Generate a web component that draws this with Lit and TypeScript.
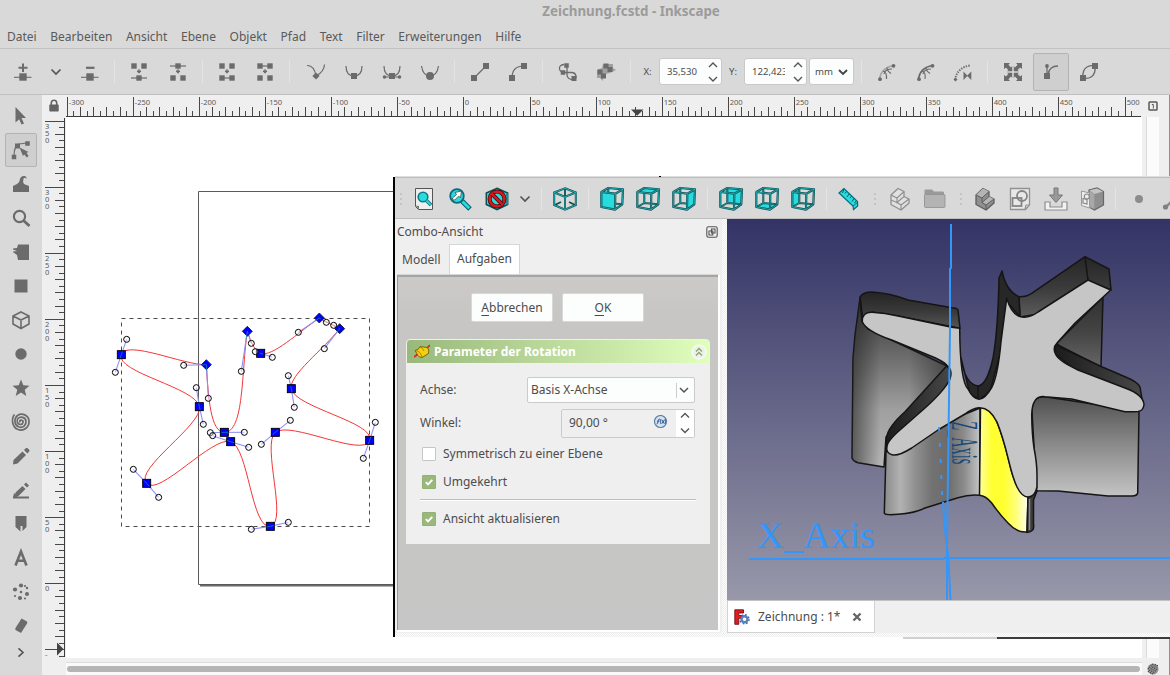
import { LitElement, html, css, svg } from "lit";
import { customElement } from "lit/decorators.js";

const G = "#6b6b6b";
const sq = (x: number, y: number, s = 6) => svg`<rect x=${x - s / 2} y=${y - s / 2} width=${s} height=${s} fill=${G}/>`;
const ln = (d: string, w = 1.2, c = G) => svg`<path d=${d} fill="none" stroke=${c} stroke-width=${w}/>`;
const fl = (d: string, c = G) => svg`<path d=${d} fill=${c}/>`;
const arrow = svg`<path d="M12 9V12M10 11H14L12 13.2Z" fill=${G} stroke=${G} stroke-width="1"/>`;

const D = "#0b4f52";
const T = "#27dbdf";
const cube = (face: string, back = false) => svg`
  ${back ? fl(face, T) : ""}
  <path d="M8.3 1V16L1.3 20M8.3 16L22.3 17.3" fill="none" stroke=${D} stroke-width="2"/>
  <path d="M8.3 1V16L1.3 20M8.3 16L22.3 17.3" fill="none" stroke="#2ba5a8" stroke-width=".7"/>
  ${back ? "" : fl(face, T)}
  <path d="M1.3 5L15.3 6.7L15 22.7L1.3 20ZM1.3 5L8.3 1L23 2.3L15.3 6.7M23 2.3L22.3 17.3L15 22.7" fill="none" stroke=${D} stroke-width="2.2" stroke-linejoin="round"/>
  <path d="M1.3 5L15.3 6.7L15 22.7L1.3 20ZM1.3 5L8.3 1L23 2.3L15.3 6.7M23 2.3L22.3 17.3L15 22.7" fill="none" stroke="#2ec4c8" stroke-width=".7" stroke-linejoin="round"/>`;

const ICONS: Record<string, unknown> = {
  add: svg`${sq(12, 17, 7.4)}${ln("M3 17.3H20.5", 1.1)}${ln("M12 3.5V12M7.5 7.8H16.5", 2)}`,
  del: svg`${sq(12, 17, 7.4)}${ln("M3 17.3H20.5", 1.1)}${ln("M8 7.8H16.5", 2.2)}`,
  chev: ln("M7.5 9.5L12 14L16.5 9.5", 1.7, "#555"),
  join: svg`${sq(7, 6, 5.4)}${sq(17, 6, 5.4)}${sq(12, 18, 5.4)}${ln("M4 18H20")}${arrow}`,
  brk: svg`${sq(12, 6, 5.4)}${sq(7, 18, 5.4)}${sq(17, 18, 5.4)}${ln("M4 6H20")}${arrow}`,
  joinseg: svg`${sq(7, 6, 5.4)}${sq(17, 6, 5.4)}${sq(7, 18, 5.4)}${sq(17, 18, 5.4)}${ln("M7 18H17")}${arrow}`,
  delseg: svg`${sq(7, 6, 5.4)}${sq(17, 6, 5.4)}${sq(7, 18, 5.4)}${sq(17, 18, 5.4)}${ln("M7 6H17")}${arrow}`,
  cusp: svg`${ln("M3 5.5Q10 5 12 16Q20 12 20.5 4.5")}${fl("M8.4 16L12 12.4L15.6 16L12 19.6Z")}`,
  smooth: svg`${ln("M4 6Q4 16 12 16Q20 16 20 6")}${sq(12, 16)}`,
  symm: svg`${ln("M4 6Q4 16 12 16Q20 16 20 6M4 17H20")}${sq(12, 16)}<circle cx="4.5" cy="17" r="1.8" fill=${G}/><circle cx="19.5" cy="17" r="1.8" fill=${G}/>`,
  auto: svg`${ln("M3.5 6Q5 16 12 16Q19 16 20.5 6")}<circle cx="12" cy="16" r="4" fill=${G}/>`,
  line: svg`${ln("M6 18L18 6")}${sq(6, 18)}${sq(18, 6)}`,
  curve: svg`${ln("M6 18Q6 6 18 6")}${sq(6, 18)}${sq(18, 6)}`,
  o2p: svg`${ln("M8 4.5Q3 5 3.5 9Q4 12 8 12.5H16Q20.5 13 20 18", 1.3)}${ln("M11 5.5V15Q11.5 19.5 17 19.5", 1.3)}${sq(10.5, 5.5, 4.5)}${sq(7, 12.5, 4.5)}${sq(18, 18.5, 5)}`,
  s2p: svg`${fl("M3 10L8 8L9 4L19 4L19 8L22 10L16 13L12 14L9 17L9 21L6 18L3 18Z", "#a0a0a0")}${sq(12, 6, 5)}${sq(6, 12, 5)}${sq(16, 9.5, 5)}${sq(9.5, 16, 5)}`,
  lpe1: svg`${ln("M4.5 19Q6 8 18.5 5.5", 1.4, "#a5a5a5")}${ln("M8 11Q12 12 11.5 19M12 7.5Q12 11 16 13.5M9 14Q10 9 17 9", 1.2)}<circle cx="5" cy="19.2" r="1.9" fill=${G}/><circle cx="18.5" cy="5.8" r="1.9" fill=${G}/>`,
  lpe2: svg`${ln("M4.5 19Q6 7.5 18.5 5.5", 1.6)}${ln("M8 11Q12 12 11 19M12 8Q12 11 16 13.5M9 14Q10 9 17 9", 1.1)}<circle cx="5" cy="19.2" r="1.9" fill=${G}/><circle cx="18.5" cy="5.8" r="1.9" fill=${G}/>`,
  lpe3: svg`<path d="M4 20Q6 7.5 19 5.5" fill="none" stroke=${G} stroke-width="2" stroke-dasharray="1.4 1.2"/>${fl("M12.5 11.5L16.5 15.7L12.5 20ZM16 15.7L20.3 11.5V20Z")}${fl("M4.5 17.5l2 2-2 2-2-2z")}`,
  handles4: svg`${[0, 90, 180, 270].map(a => svg`<path transform="rotate(${a} 12 12)" d="M3 3H9L7.4 4.8L10 7.4L11.2 6V11.2H6L7.4 10L4.8 7.4L3 9Z" fill=${G}/>`)}`,
  handle: svg`${ln("M8 16V6M9 15Q10 6 19 6", 1.3)}${sq(8, 16)}<circle cx="8" cy="6" r="1.9" fill=${G}/>`,
  outline: svg`${ln("M6 18Q5 10 10 7Q14 5 18 6Q19 14 14 17Q11 19 6 18Z", 1.3)}${sq(6, 18)}${sq(18, 6)}`,

  select: fl("M6.5 3L17 14H12.5L15 19.5L12.5 20.5L10.2 15.2L6.5 18.5Z"),
  node: svg`${ln("M5 18Q5 8 10 6L18 5")}${sq(5, 19, 4.5)}${sq(8.5, 8, 5)}${sq(18.5, 5.5, 4.5)}${fl("M10.5 9.5L19.5 14L17.5 14.7L19.5 18L18 19.5L15.2 16.5L14 18Z")}`,
  tweak: fl("M4 20V14L8 12Q11 10 11 7Q12 3.5 16 4Q18 5 17.5 7Q16 5 14.5 6.5Q13.5 10 15 12L20 14V20Z"),
  zoom: svg`<circle cx="10.5" cy="10.5" r="5.6" fill="none" stroke=${G} stroke-width="2.1"/>${ln("M14.5 14.5L20.5 20", 2.8)}`,
  measure: svg`${fl("M9 4.5H20V20H9L8 15L4.5 12.5L4 11.5L8 11L4 9.5V8.5L8 8Z")}`,
  rect: fl("M5.5 5.5H18.5V18.5H5.5Z"),
  box: ln("M12 4L20 8V16L12 20.5L4 16V8ZM4 8L12 12L20 8M12 12V20.5", 1.6),
  ellipse: svg`<circle cx="12" cy="12" r="5.7" fill=${G}/>`,
  star: fl("M12 3.5L14.3 9.3L20.5 9.8L15.7 13.7L17.3 20L12 16.5L6.7 20L8.3 13.7L3.5 9.8L9.7 9.3Z"),
  spiral: ln("M5.5 4.5C2 9 3 17 9 19.5C15 21.5 20.5 17 20 11C19.5 5 13 2.5 8.5 5.5C4.5 9 5.5 15 9.5 16.8C14 18.5 17.5 15 17 11C16.3 7 11.5 6 9 8.5C7 11 8.5 14.3 11.5 14.5C14.5 14.3 15 10.5 12.3 10C10.8 10 10.3 11.5 11.2 12.4", 1.7),
  pencil: fl("M4 20.5L4.5 16L13.5 7.5L17 11L8.5 19.5ZM15 6L17 4Q18 3.5 19.8 5.2Q21 6.5 20.2 7.5L18.3 9.5Z"),
  pen: svg`${fl("M6 18L6.5 14.5L13.5 8L16.5 11L9.5 18ZM15 6.5L17 4.5L20 7.5L18 9.5Z")}${ln("M4 19.5H20", 2)}${fl("M4 20L5 15L9 19Z")}`,
  calli: fl("M6.5 4H17.5V15L13.5 19V14H11.5V19.5L6.5 15Z"),
  text: ln("M6.5 19.5L12 5.5L17.5 19.5M8.5 14.7H15.5", 2.6),
  spray: svg`${[[12, 5.5, 2.1], [18, 8, 1.2], [6, 9.5, 2.1], [18, 14, 2], [11, 18, 2.1], [12, 12, 1.3], [6, 16, 1.1], [16, 6, 1.1], [16, 18.5, 1.1]].map(c => svg`<circle cx=${c[0]} cy=${c[1]} r=${c[2]} fill=${G}/>`)}`,
  eraser: fl("M12.5 4.5L18 7.5Q18.5 8.5 18 9.5L12 19L6.5 16Q6 15 6.5 14Z"),
  more: ln("M9.5 7.3L14 11.5L9.5 15.7", 1.6, "#555"),

  fitall: svg`<path d="M3.5 1.5H20.5V22.5H6.5L3.5 19.5Z" fill="#eeeeec" stroke="#555" stroke-width="1"/>${fl("M3.5 18.5L7 19V22.5Z", "#777")}<circle cx="11" cy="10" r="4.8" fill=${T} stroke="#0c7a88" stroke-width="1.6"/>${ln("M14.5 13.5L19 18", 3.6, "#0c6a78")}${ln("M14.5 13.5L18.6 17.6", 1.8, T)}`,
  fitsel: svg`<circle cx="9" cy="9" r="6.8" fill=${T} stroke="#0c6a78" stroke-width="1.8"/>${ln("M14 14L22 22", 5, "#0c5a66")}${ln("M14.5 14.5L21.3 21.3", 3, T)}<path d="M5 13L4.5 11L8.5 7.5L7 5.5L13.5 4L12.5 10.5L10.5 9.2L6.8 13Z" fill="#fff" stroke="#333" stroke-width=".7"/>`,
  drawstyle: svg`<path d="M12 1.3L22.7 6V17.5L12 22.7L1.3 17.5V6Z" fill=${T} stroke=${D} stroke-width="1.5"/>${ln("M22 6.5V17.5", 2, "#188f95")}<circle cx="12" cy="12" r="7.4" fill="none" stroke="#3a0508" stroke-width="4"/><circle cx="12" cy="12" r="7.4" fill="none" stroke="#d8171d" stroke-width="2.6"/>${ln("M6.9 6.9L17.1 17.1", 4, "#3a0508")}${ln("M6.6 6.6L17.4 17.4", 2.6, "#d8171d")}`,
  iso: svg`${ln("M12 2V9M1.8 18L8 15M22.2 18L16 15", 1.8, D)}${ln("M12 1.3L22.8 5.5V18L12 22.7L1.2 18V5.5ZM1.5 5.5L12 10L22.5 5.5M12 10V22.7", 2, D)}${ln("M12 1.3L22.8 5.5V18L12 22.7L1.2 18V5.5ZM1.5 5.5L12 10L22.5 5.5M12 10V22.7", 0.8, "#2ec4c8")}`,
  front: cube("M1.3 5L15.3 6.7L15 22.7L1.3 20Z"),
  top: cube("M1.3 5L8.3 1L23 2.3L15.3 6.7Z"),
  right: cube("M15.3 6.7L23 2.3L22.3 17.3L15 22.7Z"),
  rear: cube("M8.3 1L23 2.3L22.3 17.3L8.3 16Z", true),
  bottom: cube("M1.3 20L8.3 16L22.3 17.3L15 22.7Z", true),
  left: cube("M1.3 5L8.3 1V16L1.3 20Z", true),
  ruler: svg`<path d="M2 6L7 1.5L20.5 14.5L20.7 19L16.5 22.5L16 19Z" fill=${T} stroke="#0c6a78" stroke-width="1.2"/>${ln("M7 2L5.5 6M9.5 4.5L8 6.5M12 7L10 10M14.5 9.3L13 11M17 11.5L15 14.5M19 14L17.5 16", 1, "#0c5a66")}${ln("M16 19L20.3 15.5", 1, "#0c6a78")}`,
  part: svg`<path d="M3 8L10 1.5L16 4.5V9.5L21 12V16L13 23L3 17.5Z" fill="#e0e0e0" stroke="#8e8e8e" stroke-width="1.3" stroke-linejoin="round"/>${ln("M3 8L9 11L16 4.5M9 11V15.5L16 9.5M9 15.5L13 18L21 12M13 18V23M3 13L9 15.5", 1.1, "#8e8e8e")}`,
  folder: svg`${fl("M1.5 3.5Q1.5 2.5 2.5 2.5H9L11 4.5H20Q21 4.5 21 6V20H1.5Z", "#9a9a9a")}<rect x="1.5" y="7.5" width="20.5" height="13" rx="1" fill="#b3b3b3" stroke="#8f8f8f" stroke-width=".8"/>`,
  body: svg`<path d="M3 8L10 1.5L16 4.5V9.5L21 12V16L13 23L3 17.5Z" fill="#8f8f8f" stroke="#5e5e5e" stroke-width="1.3" stroke-linejoin="round"/>${fl("M3 8L10 1.5L16 4.5L9 11ZM9 15.5L16 9.5L21 12L13 18Z", "#b4b4b4")}${ln("M3 8L9 11L16 4.5M9 11V15.5L16 9.5M9 15.5L13 18L21 12M13 18V23", 1, "#5e5e5e")}`,
  sketch: svg`<path d="M2.5 1.5H21.5V18L17.5 22.5H2.5Z" fill="#e8e8e8" stroke="#929292" stroke-width="1.3"/><circle cx="14" cy="9" r="5" fill="none" stroke="#858585" stroke-width="1.8"/><rect x="4.5" y="11" width="9" height="8" fill="none" stroke="#858585" stroke-width="1.8"/>${ln("M17 22L18 18H21.5", 1.2, "#929292")}`,
  import: svg`<path d="M1 15H6V20H18V15H23V23H1Z" fill="#f2f2f2" stroke="#8e8e8e" stroke-width="1.2"/><path d="M10 1H14V8H18.5L12 15.5L5.5 8H10Z" fill="#9a9a9a" stroke="#777" stroke-width="1"/>`,
  map: svg`<path d="M9 3L17 1L23.5 4.5V18L14.5 23L9 20Z" fill="#8f8f8f" stroke="#666" stroke-width="1.2"/>${fl("M9.5 3.2L17 1.5L23 4.5L14.5 7Z", "#c4c4c4")}${fl("M9.5 4L14.3 7V22L9.5 20Z", "#a8a8a8")}<path d="M1.5 4L9.5 6V21L1.5 18.5Z" fill="#eee" stroke="#999" stroke-width="1"/><circle cx="6.8" cy="9.5" r="2.5" fill="none" stroke="#888" stroke-width="1.2"/>${ln("M3 11.5L7 12.5V17L3 16Z", 1.2, "#888")}`,
  point: svg`<circle cx="12" cy="12" r="4" fill="#8c8c8c"/>`,
  seg: svg`${ln("M4 20L14 10", 2.6, "#8a8a8a")}<circle cx="3.5" cy="20" r="2.6" fill="#808080"/>`,
};
const icon = (n: string) => html`<svg class="ic" width="24" height="24" viewBox="0 0 24 24">${ICONS[n]}</svg>`;

const HANDLES: [number, number, [number, number][], boolean?][] = [
  [64, 164, [[80, 118], [46, 217]]], [298, 320, [[289, 263], [310, 373]]],
  [140, 550, [[100, 508], [176, 592]]], [373, 397, [[331, 398], [433, 397]]],
  [392, 425, [[338, 407], [446, 442]]], [482, 160, [[466, 155], [517, 172]]],
  [574, 266, [[565, 227], [583, 322]]], [526, 397, [[571, 361], [484, 433]]],
  [809, 421, [[826, 367], [790, 475]]], [511, 679, [[454, 688], [565, 667]]],
  [319, 194, [[251, 196], [325, 295]], true], [442, 94, [[424, 214], [454, 130]], true],
  [658, 54, [[595, 97], [679, 67]], true], [719, 86, [[701, 76], [673, 146]], true],
];

const hRuler = () => {
  const out = [];
  for (let i = 0; i <= 161; i++) {
    const x = Math.floor(67.3 + i * 6.611) + 0.5;
    const h = i % 10 === 0 ? 19 : i % 2 === 0 ? 9 : 5;
    out.push(svg`<path d="M${x} ${116 - h}V116" stroke="#484848"/>`);
    if (i % 10 === 0) out.push(svg`<text x=${x + 1.2} y="105">${-300 + i * 5}</text>`);
  }
  return out;
};
const vRuler = () => {
  const out = [];
  for (let i = 0; i <= 81; i++) {
    const y = Math.floor(121 + i * 6.611) + 0.5;
    if (y > 657) break;
    const w = i % 10 === 0 ? 19 : i % 2 === 0 ? 9 : 5;
    out.push(svg`<path d="M${64 - w} ${y}H64" stroke="#484848"/>`);
    if (i % 10 === 0) {
      const s = i === 80 ? "-" : String(350 - i * 5);
      out.push(svg`<text y=${y + 7}>${[...s].map((c, k) => svg`<tspan x="45" dy=${k ? 7 : 0}>${c}</tspan>`)}</text>`);
    }
  }
  return out;
};

@customElement("ink-canvas")
class InkCanvas extends LitElement {
  static styles = css`
    :host { display: block; flex: 1; background: #efefef; overflow: hidden; }
    svg { display: block; }
    text { font: 7.6px "Noto Sans", sans-serif; fill: #5c5c5c; }
  `;
  render() {
    return html`<svg width="1128" height="580" viewBox="42 95 1128 580">
      <path d="M66 117H1142V658H66Z" fill="#fff"/>
      <path d="M198.5 191.5H420V584.5H198.5Z" fill="none" stroke="#5a5a5a"/>
      <path d="M200 585.8H420" stroke="#6a6a6a" stroke-width="1.6"/>
      <path d="M66 116.5H1141M64.5 118V657" stroke="#3c3c3c"/>
      ${hRuler()}${vRuler()}
      <path d="M631 109.5H643.5L637.2 115.8Z" fill="#444"/>
      <path d="M57 642.5V655.5L63.5 649Z" fill="#444"/>
      <rect x="49.3" y="104.5" width="9.4" height="7" rx=".8" fill="#636363"/>
      <path d="M51.3 105V102.8Q51.5 100.3 54 100.3T56.7 102.8V105" fill="none" stroke="#636363" stroke-width="1.6"/>
      <rect x="1149" y="102" width="8" height="8" rx=".8" fill="none" stroke="#5a5a5a" stroke-width="1.5"/>
      <path d="M1151.8 104.5H1153.3V108.5" fill="none" stroke="#555"/>
      <path d="M1146.5 117V658" stroke="#dadada"/><path d="M1147 117H1159V658H1147Z" fill="#fbfbfb"/>
      <path d="M1169.5 95V675" stroke="#8e8e8e"/>
      <path d="M66 662.5H1142" stroke="#dcdcdc"/><path d="M66 663H1142V675H66Z" fill="#fafafa"/>
      <rect x="67" y="666" width="1073" height="6" rx="3" fill="#b5b5b5"/>
      <circle cx="1153" cy="669" r="5.5" fill="#9a9094"/>
      <path d="M1148 669l5-5M1148 672l8-8M1150 673l8-8M1152 674l5-5" stroke="#39493b" stroke-width="1.3" stroke-dasharray="1 1"/>
      <path d="M121.5 318.5H369.5V526.5H121.5Z" fill="none" stroke="#4c4c4c" stroke-dasharray="4 4"/>
      <g transform="translate(100 300) scale(.33333)">
        <path fill="none" stroke="#f53434" stroke-width="3" d="M64 164C80 118 251 196 319 194C325 295 332 397 373 397C433 397 424 214 442 94C454 130 466 155 482 160C517 172 595 97 658 54C679 67 701 76 719 86C673 146 565 227 574 266C583 322 826 367 809 421C790 475 571 361 526 397C484 433 565 667 511 679C454 688 446 442 392 425C337 407 176 592 140 550C100 508 310 373 298 320C289 263 46 217 64 164Z"/>
        ${HANDLES.map(([x, y, hs, dia]) => svg`
          ${hs.map(h => svg`<path d="M${x} ${y}L${h[0]} ${h[1]}" stroke="#8f8ff4" stroke-width="3.2"/>`)}
          ${dia
            ? svg`<path d="M${x} ${y - 15}L${x + 15} ${y}L${x} ${y + 15}L${x - 15} ${y}Z" fill="#00f" stroke="#111" stroke-width="2.4"/>`
            : svg`<rect x=${x - 12} y=${y - 12} width="24" height="24" fill="#00f" stroke="#000" stroke-width="2.8"/>`}
          ${hs.map(h => svg`<path d="M${x} ${y}L${x + (h[0] - x) * 0.2} ${y + (h[1] - y) * 0.2}" stroke="#2196a0" stroke-width="2"/>`)}
          ${hs.map(h => svg`<circle cx=${h[0]} cy=${h[1]} r="9" fill="#fff" fill-opacity=".35" stroke="#000" stroke-width="3"/>`)}`)}
      </g>
    </svg>`;
  }
}

@customElement("model-view")
class ModelView extends LitElement {
  static styles = css`
    :host { display: block; height: 381px; }
    svg { display: block; }
    text { font-family: "Liberation Serif", serif; font-size: 38px; }
  `;
  render() {
    const lg = (id: string, v: boolean, ...s: string[]) => svg`<linearGradient id=${id} x2=${v ? 0 : 1} y2=${v ? 1 : 0}>${s.map((c, i) => svg`<stop offset=${i / (s.length - 1)} stop-color=${c}/>`)}</linearGradient>`;
    return html`<svg width="443" height="381" viewBox="727 219 443 381">
      <defs>
        ${lg("bg", true, "#333366", "#9898aa")}
        ${lg("la", true, "#242424", "#383838", "#555")}
        ${lg("lbv", true, "#333", "#6a6a6a", "#a0a0a0", "#b4b4b4")}
        <linearGradient id="lbh"><stop offset="0" stop-color="#222" stop-opacity=".6"/><stop offset=".3" stop-color="#222" stop-opacity="0"/><stop offset=".6" stop-color="#222" stop-opacity="0"/><stop offset="1" stop-color="#222" stop-opacity=".55"/></linearGradient>
        ${lg("ll", false, "#8a8a8a", "#b2b2b2", "#8e8e8e", "#727272", "#6c6c6c", "#8b8b8b", "#c4c4c4")}
        ${lg("rb", true, "#505050", "#8c8c8c", "#c4c4c4")}
        ${lg("rt", true, "#303030", "#444", "#666")}
        ${lg("dk", false, "#1b1b1b", "#484848")}
        ${lg("tr", true, "#262626", "#3a3a3a", "#5c5c5c")}
        ${lg("ye", false, "#ffff9c", "#ffff33", "#ffff30", "#ffff78", "#fffff0")}
      </defs>
      <path d="M727 219H1170V600H727Z" fill="url(#bg)"/>
      <g stroke="#151515" stroke-width="1.5" stroke-linejoin="round">
        <path fill="url(#lbv)" d="M860 298L855 335L853 358L852 458Q853 461 858 462.7L884 467L886 437L947 366L868 329L862 320Z"/>
        <path fill="url(#lbh)" stroke="none" d="M860 298L855 335L853 358L852 458Q853 461 858 462.7L884 467L886 437L947 366L868 329L862 320Z"/>
        <path fill="url(#la)" d="M862.3 321.7L860 297Q863 292 872 292Q890 293 908 300L952 307.7Q957 308 958 310L960 328.3L898 316L872 312Z"/>
        <path fill="none" d="M860 298L863 319"/>
        <path fill="url(#dk)" d="M946.7 366L905 411.7Q888 427 886.7 437L886 452L896 450L950 385L952 372Z"/>
        <path fill="url(#ll)" d="M886 452L884.3 513Q885 515.5 898 514.3Q915 513 925 508L958 497.7Q970 494 980 495.3V408L938 425Z"/>
        <path fill="url(#rt)" d="M1103 297L1101 367L1056 344Z"/>
        <path fill="url(#dk)" d="M1056.7 343Q1059 347 1064 349L1101.7 366.7L1125 376.7Q1138 382 1140 387L1142.5 402L1078 372L1054 353Z"/>
        <path fill="url(#tr)" d="M1020 317L1019 296.7Q1026 297 1031.7 293.3L1085 256.7L1109 269L1111 290L1088 281L1038 314Z"/>
        <path fill="none" d="M1085 257L1088 280"/>
        <path fill="#272727" d="M1002 271Q1006 291 1019 296.7L1020 317L1007 302L1001 350L990 392L979 399.5L970 394L961 358Q965 384 978 386Q987 385 993 358Q998 330 999 278Z"/>
        <path fill="none" d="M978 386V399"/>
        <path fill="url(#rb)" d="M1032 412Q1031 396 1045 396.7L1139 411L1137.7 493Q1137 496 1132 496H1108L1058 491L1036.7 490.7Z"/>
        <path fill="url(#ye)" d="M980.5 407.7Q989 406 996 420Q1003 436 1011.7 471.7Q1019 495 1028 497L1027 532Q1017 533 1008 523Q1000 515 991.7 503Q986 496 979.5 495.3Z"/>
        <path fill="#3c3c3c" d="M1028 497L1037 491L1033.5 500V524Q1035 532 1027 532.5Z"/>
        <path fill="#c6c6c6" d="M862.3 321.7Q862 312 872 312.3Q885 313 898 316L951.7 327.3L959.7 328.3Q960 381 968 389Q973 399 979 399.3Q985 399 992 387Q998 375 1001 341.7L1006.7 298.3Q1012 316 1022 317Q1030 318 1038 312L1088 280L1110.7 290L1075 323L1057 343Q1052 348 1056 355Q1059 361 1078 370L1125 388Q1144 395 1144 405Q1143 411 1138 411.5Q1130 412 1125 411.7L1071.7 399L1045 396.7Q1032 395 1031.7 415Q1032 435 1034 448Q1037 463 1037 475V487Q1035 497 1028 497Q1022 497 1017 487Q1013 479 1008 458Q1003 437 997 422Q990 408 980 407.7Q974 407 965 414L938 430L911.7 448Q899 456 893 455Q884 453 888 443Q891 438 898 431.7L925 408Q945 390 950 379Q953 370 946.7 365Q944 362 935 357.7L891.7 340Q866 331 862.3 321.7Z"/>
      </g>
      <path d="M1029.5 499V530" stroke="#888" stroke-width="1.5"/>
      <path d="M939 427L942.5 502" stroke="#39f" stroke-width="1.8" fill="none" stroke-dasharray="4 12"/>
      <text transform="translate(951.5 421.5) rotate(90) scale(.375 1)" fill="#174a7c">Z_Axis</text>
      <g fill="none" stroke="#3396fb" stroke-width="2">
        <path d="M951 224V268L950 269V330L949 400L948 470L947 546V600"/>
        <path d="M943 502L944.5 525L947 546L948.5 560L950.5 600"/>
        <path d="M749 559H944.5M944 558H1170"/>
      </g>
      <text x="756.5" y="548" fill="#3396fb">X_Axis</text>
    </svg>`;
  }
}

type Slot = [string, number];
const slots = (list: Slot[]) => list.map(([n, w]) =>
  html`<div class="slot" style="width:${w}px">${n === "|" ? html`<i class="sep"></i>` : n === ":" ? html`<i class="grip"></i>` : icon(n)}</div>`);

const shared = css`
  * { box-sizing: border-box; }
  .ic { display: block; flex: none; overflow: visible; }
  .slot { display: flex; align-items: center; justify-content: center; flex: none; }
  .sep { width: 1px; height: 23px; background: #e4e4e4; }
  .grip { width: 2px; height: 12px; background: repeating-linear-gradient(#c4c4c4 0 2px, transparent 2px 5px); }
`;

@customElement("cad-window")
class CadWindow extends LitElement {
  static styles = [shared, css`
    :host { display: flex; flex-direction: column; width: 777px; height: 460px; border-left: 2px solid #000; background: #efefef; overflow: hidden; }
    .bar { display: flex; height: 42px; flex: none; background: #d9d9d9; border-top: 1px solid #bdbdbd; border-bottom: 1px solid #bdbdbd; overflow: hidden; padding-top: 1px; }
    .main { display: flex; flex: 1; min-height: 0; }
    .combo { width: 327px; flex: none; padding-left: 2px; }
    .dock { display: flex; justify-content: space-between; align-items: center; height: 25px; padding-right: 4px; }
    .tabs { display: flex; height: 30px; }
    .tab { display: flex; align-items: center; }
    .tab.off { width: 52px; padding: 1px 6px 0 5px; }
    .tab.on { width: 71px; background: #fff; border: 1px solid #d6d6d6; border-bottom: none; padding: 0 6px 1px 7px; }
    .pane { width: 323px; height: 358px; border: solid; border-width: 1px 2px 2px 0; border-color: #d6d6d6 #fff #fff; }
    .task { height: 355px; border-top: 2px solid #a5a5a5; border-left: 1px solid #999; background: linear-gradient(#cccac8, #c7c6c5 40px, #c6c6c6); padding: 16px 0 0 8px; }
    .btns { display: flex; gap: 9px; padding-left: 65px; height: 29px; }
    .btn { width: 82px; height: 29px; background: #fcfdfd; border: 1px solid #d8d8d8; border-radius: 2px; text-align: center; line-height: 27px; }
    u { text-underline-offset: 3px; text-decoration-thickness: 1px; }
    .head { margin-top: 17px; width: 304px; height: 25px; border: 1px solid #eef3ea; border-radius: 4px 4px 0 0; background: linear-gradient(90deg, #99b87c, #e0ffbd); display: flex; align-items: center; color: #fff; font-weight: 700; padding: 0 2px 0 7px; }
    .head .t { flex: 1; padding-left: 4px; }
    .form { width: 304px; height: 180px; background: #efefef; padding: 13px 15px 0 14px; }
    .row { display: flex; justify-content: space-between; align-items: center; height: 26px; }
    .row.two { height: 30px; margin-top: 5px; }
    .sel { width: 168px; height: 26px; background: #fcfdfd; border: 1px solid #cbcbcb; border-radius: 2px; display: flex; align-items: center; padding-left: 3px; }
    .sel .v, .num .v { flex: 1; }
    .sel .c { border-left: 1px solid #ccc; height: 15px; width: 18px; display: flex; align-items: center; justify-content: center; padding-right: 3px; }
    .num { width: 134px; height: 29px; border: 1px solid #cbcbcb; border-radius: 2px; display: flex; align-items: center; padding-left: 7px; }
    .sp { width: 18px; height: 27px; background: #fff; margin-left: 8px; }
    .chk { display: flex; align-items: center; gap: 7px; padding-left: 2px; height: 28px; }
    .chk.first { margin-top: 2px; }
    .b { width: 14px; height: 14px; border: 1px solid #c6c6c6; background: #fff; border-radius: 1px; flex: none; }
    .b.y { background: #9ab87c; border-color: #93b174; }
    .b svg { display: block; }
    .hr { height: 2px; border-top: 1px solid #bdbdbd; background: #fff; margin: 3px -1px 4px 0; }
    .split { width: 5px; flex: none; background: repeating-conic-gradient(#fff 0 25%, #ececec 0 50%) 0 0 / 2px 2px; }
    .view { flex: 1; min-width: 0; }
    .docs { height: 36px; border-top: 1px solid #c2c2c2; }
    .doc { width: 148px; height: 32px; background: #fff; border: 1px solid #d2d2d2; border-top: 0; display: flex; align-items: center; padding-left: 6px; }
    .doc .n { flex: 1; padding-left: 8px; }
    .doc svg:last-child { margin-right: 12px; }
  `];
  render() {
    const tick = html`<svg width="12" height="12"><path d="M2.8 6.2L5 8.4L9.3 3.8" fill="none" stroke="#fff" stroke-width="1.9"/></svg>`;
    return html`
      <div class="bar">${slots([[":", 11], ["fitall", 36], ["fitsel", 36], ["drawstyle", 38], ["chev", 18], ["|", 14], ["iso", 34], ["|", 12], ["front", 36], ["top", 36], ["right", 36], ["|", 11], ["rear", 36], ["bottom", 36], ["left", 36], ["|", 10], ["ruler", 36], [":", 16], ["part", 33], ["folder", 37], [":", 15], ["body", 33], ["sketch", 37], ["import", 36], ["map", 36], ["|", 11], ["point", 35], ["seg", 36]])}</div>
      <div class="main">
        <div class="combo">
          <div class="dock"><span>Combo-Ansicht</span><svg width="12" height="12"><path d="M.8 2.5Q.8.8 2.5.8H9.5Q11.2.8 11.2 2.5V9.5Q11.2 11.2 9.5 11.2H2.5Q.8 11.2.8 9.5ZM5.5 3H9V7H5.5ZM3 5H6.8V9H3Z" fill="none" stroke="#555" stroke-width="1.1"/></svg></div>
          <div class="tabs"><div class="tab off">Modell</div><div class="tab on">Aufgaben</div></div>
          <div class="pane"><div class="task">
            <div class="btns"><div class="btn"><u>A</u>bbrechen</div><div class="btn"><u>O</u>K</div></div>
            <div class="head">
              <svg width="16" height="16"><path d="M0 13L4 10M12 5L16 1" stroke="#d22" stroke-width="1.6"/><path d="M1 6.5Q5 6 6 2.5L13.5 3.5Q15.5 6 14.5 9.5L8 13.5Q5 13.5 4 11.5Z" fill="#f4cf12" stroke="#6f5c00" stroke-width=".9"/><path d="M1.5 6.8Q6 6.5 8 13M6 3Q9 4 10 7" fill="none" stroke="#a98700"/></svg>
              <span class="t">Parameter der Rotation</span>
              <svg width="16" height="16" viewBox="0 0 16 16"><circle cx="8" cy="8" r="7" fill="#eef1eb" stroke="#fff"/><path d="M5 7.5L8 4.5L11 7.5M5 11.5L8 8.5L11 11.5" fill="none" stroke="#85a865" stroke-width="1.4"/></svg>
            </div>
            <div class="form">
              <div class="row"><span>Achse:</span><div class="sel"><span class="v">Basis X-Achse</span><span class="c"><svg width="10" height="8"><path d="M1 2L5 6L9 2" fill="none" stroke="#555" stroke-width="1.5"/></svg></span></div></div>
              <div class="row two"><span>Winkel:</span><div class="num"><span class="v">90,00 °</span>
                <svg width="15" height="17" viewBox="0 0 15 17"><circle cx="7.5" cy="6.5" r="6" fill="#d7e2ee" stroke="#5a80ab" stroke-width="1.2"/><path d="M3.5 9Q5 9 5 6.5T7 4M4 6.2H6.5M8 4Q7 6.5 8 9M9 5L11 8.5M11.3 5L9 8.5M12 4Q13 6.5 12 9" fill="none" stroke="#2c5c96" stroke-width="1"/></svg>
                <svg class="sp" width="18" height="27"><path d="M5 7.5L9 3.5L13 7.5M5 18.5L9 22.5L13 18.5" fill="none" stroke="#555" stroke-width="1.4"/></svg></div></div>
              <div class="chk first"><i class="b"></i>Symmetrisch zu einer Ebene</div>
              <div class="chk"><i class="b y">${tick}</i>Umgekehrt</div>
              <div class="hr"></div>
              <div class="chk"><i class="b y">${tick}</i>Ansicht aktualisieren</div>
            </div>
          </div></div>
        </div>
        <div class="split"></div>
        <div class="view">
          <model-view></model-view>
          <div class="docs"><div class="doc">
            <svg width="16" height="16"><path d="M.8.8H9.5V4H4.8V6.5H8V9.3H4.8V15.3H.8Z" fill="#dc1c22" stroke="#731014" stroke-width=".9"/><circle cx="10.5" cy="10.3" r="3" fill="none" stroke="#5b80ba" stroke-width="2.4"/><circle cx="10.5" cy="10.3" r="4.6" fill="none" stroke="#3f62a0" stroke-width="1.3" stroke-dasharray="1.8 1.81"/></svg>
            <span class="n">Zeichnung : 1*</span>
            <svg width="10" height="10"><path d="M1.5 1.5L8.5 8.5M8.5 1.5L1.5 8.5" stroke="#666" stroke-width="2.4"/></svg>
          </div></div>
        </div>
      </div>`;
  }
}

@customElement("app-root")
class AppRoot extends LitElement {
  static styles = [shared, css`
    :host { display: flex; flex-direction: column; position: relative; width: 1170px; height: 675px; overflow: hidden; background: #d9d9d9; font: 12px/16px "Noto Sans", sans-serif; color: #4c4c4c; }
    .title { height: 24px; padding-left: 92px; line-height: 23px; font-size: 13.33px; font-weight: 700; color: #9b9b9b; text-align: center; flex: none; }
    .menu { display: flex; gap: 13.6px; height: 25px; padding-left: 7px; line-height: 25px; border-bottom: 1px solid #c2c2c2; flex: none; white-space: nowrap; color: #5a5a5a; }
    .tools { display: flex; align-items: center; height: 46px; padding-left: 4px; border-bottom: 1px solid #c0c0c0; flex: none; }
    .lab { font-size: 9.6px; }
    .spin { display: flex; width: 63px; height: 27px; background: #fcfefd; border: 1px solid #c9c9c9; border-radius: 3px; align-items: center; font-size: 9.6px; padding-left: 7px; }
    .spin .v { overflow: hidden; white-space: nowrap; width: 33px; margin-right: 6px; flex: none; }
    .unit { display: flex; align-items: center; justify-content: space-between; width: 45px; height: 27px; background: #fcfefd; border: 1px solid #c9c9c9; border-radius: 3px; margin-left: 2px; font-size: 9.6px; padding: 0 5px; }
    .press { background: #cfcfcf; border: 1px solid #b3b3b3; border-radius: 2px; }
    .press.h { width: 36px; height: 38px; margin-left: 1px; }
    .body { display: flex; flex: 1; min-height: 0; }
    .box { width: 42px; padding-top: 4px; flex: none; }
    .t { height: 34px; display: flex; align-items: center; justify-content: center; margin: 0 5px; width: 32px; }
    .t.last { height: 20px; }
    cad-window { position: absolute; left: 393px; top: 177px; }
    .strip { position: absolute; left: 395px; top: 176px; width: 775px; height: 1px; background: #dedede; }
    .strip.k { left: 659px; width: 2px; background: #000; }
    .strip.g { left: 903px; top: 637px; width: 94px; height: 2px; background: #d0d0d0; }
    .strip.d { left: 997px; top: 637px; width: 173px; height: 2px; background: #3c3c3c; }
    .strip.e { left: 395px; top: 633px; height: 4px; background: repeating-conic-gradient(#fff 0 25%, #ececec 0 50%) 0 0 / 2px 2px; }
  `];
  render() {
    const arrows = html`<svg width="14" height="22"><path d="M3 6L7 2L11 6M3 16L7 20L11 16" fill="none" stroke="#555" stroke-width="1.4"/></svg>`;
    return html`
      <div class="title">Zeichnung.fcstd - Inkscape</div>
      <div class="menu">${["Datei", "Bearbeiten", "Ansicht", "Ebene", "Objekt", "Pfad", "Text", "Filter", "Erweiterungen", "Hilfe"].map(m => html`<span>${m}</span>`)}</div>
      <div class="tools">
        ${slots([["add", 38], ["chev", 27], ["del", 41], ["|", 8], ["join", 42], ["brk", 35], ["|", 14], ["joinseg", 36], ["delseg", 39], ["|", 11], ["cusp", 41], ["smooth", 35], ["symm", 41], ["auto", 36], ["|", 13], ["line", 38], ["curve", 38], ["|", 11], ["o2p", 40], ["s2p", 36], ["|", 12]])}
        <span class="lab slot" style="width:23px">X:</span>
        <div class="spin"><span class="v">35,530</span>${arrows}</div>
        <span class="lab slot" style="width:22px">Y:</span>
        <div class="spin"><span class="v">122,423</span>${arrows}</div>
        <div class="unit">mm<svg width="10" height="8"><path d="M1 2L5 6L9 2" fill="none" stroke="#444" stroke-width="1.9"/></svg></div>
        ${slots([["|", 15], ["lpe1", 36], ["lpe2", 41], ["lpe3", 34], ["|", 14], ["handles4", 38]])}
        <div class="slot press h">${icon("handle")}</div>
        ${slots([["outline", 40]])}
      </div>
      <div class="body">
        <div class="box">
          ${["select", "node", "tweak", "zoom", "measure", "rect", "box", "ellipse", "star", "spiral", "pencil", "pen", "calli", "text", "spray", "eraser", "more"].map(n => html`<div class="t ${n === "node" ? "press" : n === "more" ? "last" : ""}">${icon(n)}</div>`)}
        </div>
        <ink-canvas></ink-canvas>
      </div>
      <div class="strip"></div><div class="strip k"></div><div class="strip g"></div><div class="strip d"></div>
      <cad-window></cad-window>
      <div class="strip e"></div>`;
  }
}
